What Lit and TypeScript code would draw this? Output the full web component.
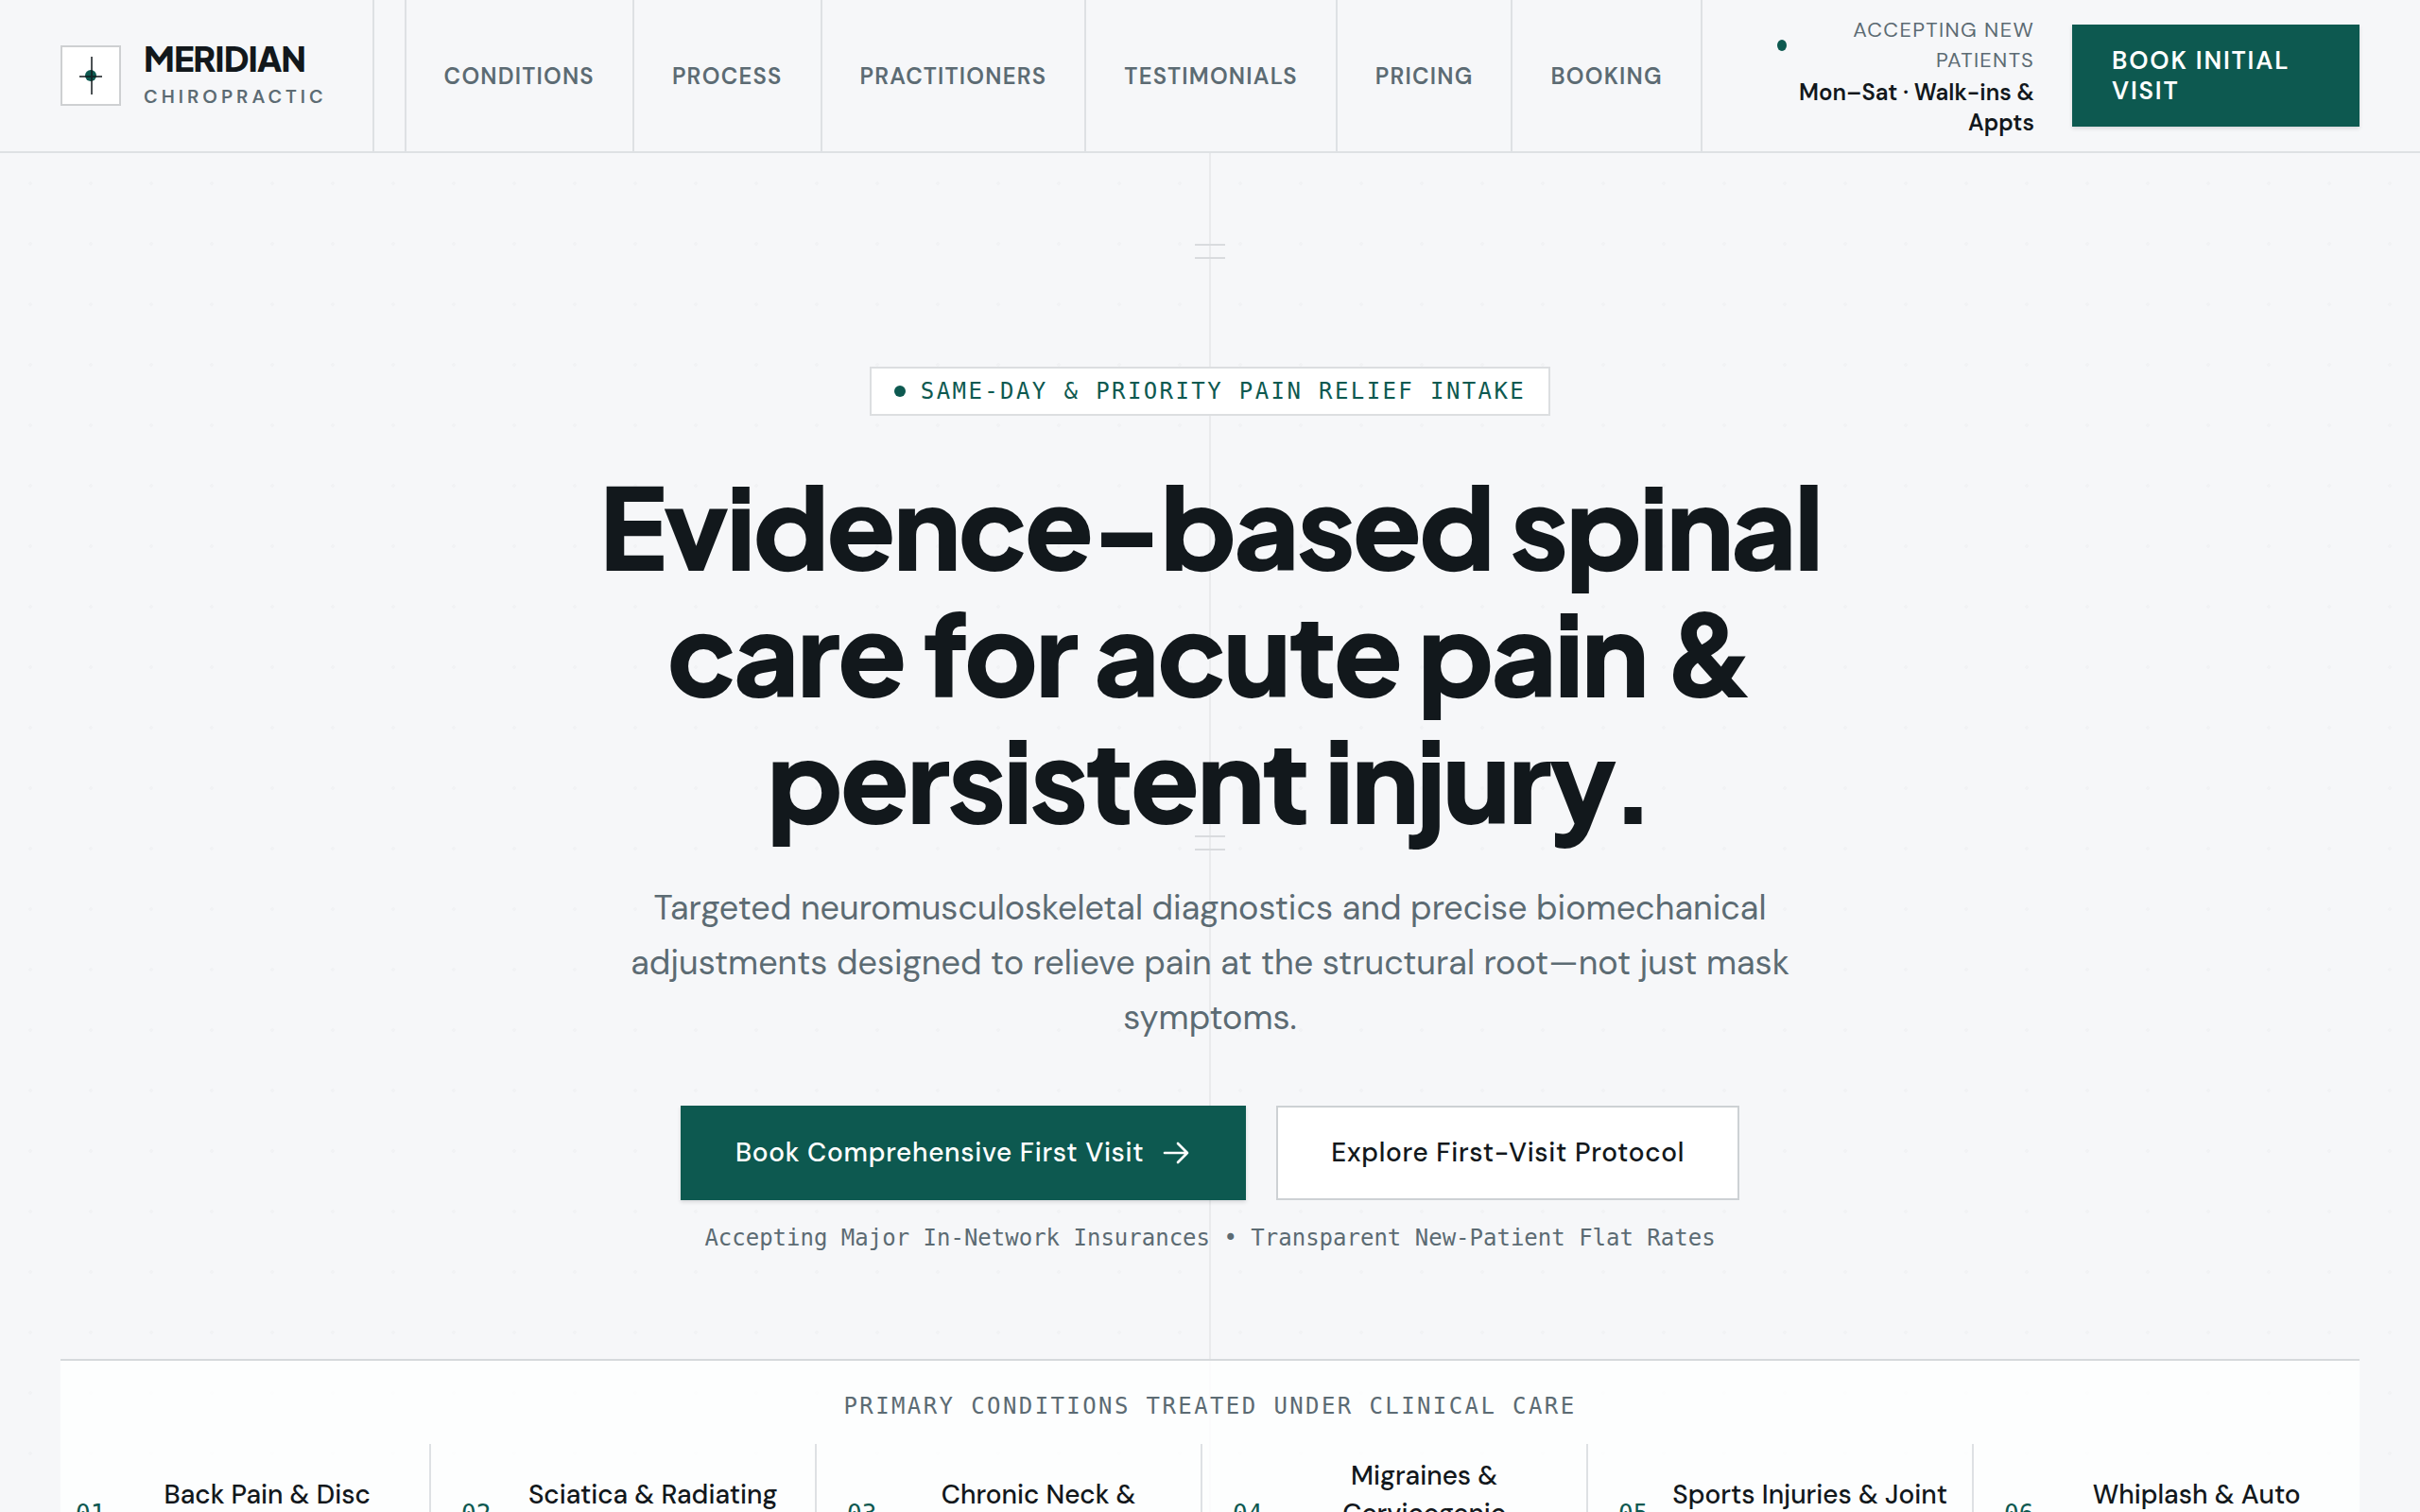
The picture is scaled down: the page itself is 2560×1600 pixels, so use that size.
import { LitElement, html, css, svg } from "lit";
import { customElement, property } from "lit/decorators.js";

const NAV = ["Conditions", "Process", "Practitioners", "Testimonials", "Pricing", "Booking"];

const CONDITIONS = [
  "Back Pain & Disc Herniation",
  "Sciatica & Radiating Leg Pain",
  "Chronic Neck & Shoulder Strain",
  "Migraines & Cervicogenic Headaches",
  "Sports Injuries & Joint Rehabilitation",
  "Whiplash & Auto Accident Injury",
];

const arrow = svg`<path d="M3 12h18M13.5 4.5 21 12l-7.5 7.5" fill="none" stroke="currentColor" stroke-width="2" stroke-linecap="round" stroke-linejoin="round"/>`;

@customElement("site-header")
export class SiteHeader extends LitElement {
  static styles = css`
    :host {
      display: block;
      border-bottom: 2px solid #dee1e4;
    }
    .bar {
      display: flex;
      align-items: stretch;
      min-height: 160px;
      padding: 0 64px;
    }
    .brand {
      display: flex;
      align-items: center;
      gap: 24px;
      padding-right: 48px;
      margin-right: 32px;
      border-right: 2px solid #dee1e4;
      color: inherit;
      text-decoration: none;
    }
    .mark {
      box-sizing: border-box;
      width: 64px;
      height: 64px;
      border: 2px solid #ced0d2;
      background: #fff;
    }
    .mark svg {
      display: block;
    }
    .words {
      display: flex;
      flex-direction: column;
      gap: 4px;
    }
    .name {
      font: 800 36px/40px "Plus Jakarta Sans", sans-serif;
      letter-spacing: -0.025em;
    }
    .sub {
      font-size: 20px;
      line-height: 32px;
      font-weight: 600;
      letter-spacing: 0.2em;
      color: #5c6b73;
    }
    .nav {
      display: flex;
      border-left: 2px solid #dee1e4;
    }
    .link {
      display: flex;
      align-items: center;
      padding: 0 40px;
      border-right: 2px solid #dee1e4;
      font-size: 24px;
      font-weight: 600;
      letter-spacing: 0.05em;
      text-transform: uppercase;
      text-decoration: none;
      color: #5c6b73;
    }
    .side {
      flex: 1;
      display: flex;
      align-items: center;
      justify-content: flex-end;
      gap: 40px;
    }
    .status {
      display: flex;
      flex-direction: column;
      align-items: flex-end;
      gap: 2px;
      padding-top: 2px;
      text-align: right;
      line-height: 32px;
    }
    .open {
      display: flex;
      align-items: center;
      gap: 12px;
      font-size: 22px;
      letter-spacing: 0.06em;
      text-transform: uppercase;
      color: #5c6b73;
    }
    .dot {
      width: 10px;
      height: 12px;
      border-radius: 50%;
      background: #0d5950;
    }
    .label,
    .hours {
      width: 250px;
    }
    .hours {
      font-size: 24px;
      font-weight: 600;
    }
    .cta {
      width: 304px;
      padding: 22px 42px;
      border: 0;
      background: #0d5950;
      box-shadow: 0 2px 4px rgba(18, 24, 28, 0.14);
      color: #fff;
      font: 600 26px/32px "DM Sans", sans-serif;
      letter-spacing: 0.07em;
      text-transform: uppercase;
      text-align: left;
    }
  `;

  render() {
    return html`
      <header class="bar">
        <a class="brand" href="#top">
          <span class="mark">
            <svg width="60" height="60" viewBox="0 0 60 60" aria-hidden="true">
              <circle cx="30" cy="30" r="6" fill="#0d5950" />
              <path d="M30 10h2v40h-2zM18 30h24v2h-24z" fill="#12181c" fill-opacity=".75" />
            </svg>
          </span>
          <span class="words">
            <span class="name">MERIDIAN</span>
            <span class="sub">CHIROPRACTIC</span>
          </span>
        </a>
        <nav class="nav">
          ${NAV.map((n) => html`<a class="link" href="#${n.toLowerCase()}">${n}</a>`)}
        </nav>
        <div class="side">
          <div class="status">
            <div class="open"><span class="dot"></span><span class="label">Accepting New Patients</span></div>
            <div class="hours">Mon–Sat · Walk-ins &amp; Appts</div>
          </div>
          <button class="cta" type="button">Book Initial Visit</button>
        </div>
      </header>
    `;
  }
}

@customElement("condition-cell")
export class ConditionCell extends LitElement {
  @property({ type: Number }) index = 0;
  @property() name = "";

  static styles = css`
    :host {
      display: flex;
      align-items: center;
      gap: 16px;
      padding: 14px 16px;
      border-right: 2px solid #dee1e4;
    }
    :host(:last-child) {
      border-right: 0;
    }
    .num {
      font: 26px/32px "DejaVu Sans Mono", monospace;
      color: #0d5950;
    }
    .name {
      flex: 1;
      font-size: 28px;
      line-height: 40px;
      font-weight: 500;
      text-align: center;
    }
  `;

  render() {
    return html`
      <span class="num">${String(this.index).padStart(2, "0")}</span>
      <span class="name">${this.name}</span>
    `;
  }
}

@customElement("app-root")
export class AppRoot extends LitElement {
  static styles = css`
    :host {
      display: block;
      height: 100vh;
      overflow: hidden;
      background: #f6f7f9;
      color: #12181c;
      font-family: "DM Sans", sans-serif;
    }
    .hero {
      position: relative;
      display: flex;
      flex-direction: column;
      align-items: center;
      padding: 226px 64px 96px;
      background: radial-gradient(circle, rgba(18, 24, 28, 0.02) 2px, transparent 2px) 0 0 / 64px 64px;
      text-align: center;
    }
    .axis {
      position: absolute;
      top: 0;
      bottom: 0;
      left: 50%;
      width: 2px;
      margin-left: -1px;
      background: #e9ebed;
    }
    .tick {
      position: absolute;
      left: 50%;
      width: 32px;
      height: 12px;
      margin-left: -16px;
      border: solid #d9dbde;
      border-width: 2px 0;
    }
    .tick.upper {
      top: 96px;
    }
    .tick.lower {
      top: 722px;
    }
    .badge,
    .title,
    .lead,
    .actions,
    .note,
    .panel {
      position: relative;
    }
    .badge {
      display: flex;
      align-items: center;
      gap: 16px;
      padding: 8px 24px;
      border: 2px solid #dcdee0;
      background: #fff;
      color: #0d5950;
      font: 24px/32px "DejaVu Sans Mono", monospace;
      letter-spacing: 0.1em;
      text-transform: uppercase;
    }
    .badge .dot {
      width: 12px;
      height: 12px;
      border-radius: 50%;
      background: #0d5950;
    }
    .title {
      max-width: 1400px;
      margin: 48px 0 0;
      font: 800 120px/134px "Plus Jakarta Sans", sans-serif;
      letter-spacing: -0.025em;
    }
    .lead {
      max-width: 1280px;
      margin: 42px 0 0;
      font-size: 36px;
      line-height: 58px;
      color: #5c6b73;
    }
    .actions {
      display: flex;
      gap: 32px;
      margin-top: 64px;
    }
    .btn {
      box-sizing: border-box;
      display: flex;
      align-items: center;
      gap: 18px;
      min-height: 100px;
      padding: 0 56px;
      border: 2px solid #cdd1d4;
      background: #fff;
      color: inherit;
      font: 500 28px/40px "DM Sans", sans-serif;
      letter-spacing: 0.025em;
      text-decoration: none;
    }
    .btn.solid {
      border-color: #0d5950;
      background: #0d5950;
      box-shadow: 0 2px 4px rgba(18, 24, 28, 0.14);
      color: #fff;
    }
    .note {
      margin: 24px 0 0;
      font: 24px/32px "DejaVu Sans Mono", monospace;
      color: #5c6b73;
    }
    .panel {
      align-self: stretch;
      margin-top: 112px;
      padding: 32px 0 24px;
      border-top: 2px solid #d6d9dc;
      background: rgba(255, 255, 255, 0.8);
    }
    .heading {
      margin: 0 0 24px;
      font: 24px/32px "DejaVu Sans Mono", monospace;
      letter-spacing: 0.1em;
      text-transform: uppercase;
      color: #5c6b73;
    }
    .cells {
      display: grid;
      grid-template-columns: repeat(6, minmax(0, 1fr));
      gap: 16px;
    }
  `;

  render() {
    return html`
      <site-header></site-header>
      <main class="hero" id="top">
        <span class="axis"></span>
        <span class="tick upper"></span>
        <span class="tick lower"></span>
        <div class="badge"><span class="dot"></span>Same-Day &amp; Priority Pain Relief Intake</div>
        <h1 class="title">Evidence-based spinal care for acute pain &amp; persistent injury.</h1>
        <p class="lead">
          Targeted neuromusculoskeletal diagnostics and precise biomechanical adjustments designed to relieve pain at
          the structural root—not just mask symptoms.
        </p>
        <div class="actions">
          <a class="btn solid" href="#booking">
            Book Comprehensive First Visit
            <svg width="32" height="32" viewBox="0 0 24 24" aria-hidden="true">${arrow}</svg>
          </a>
          <a class="btn" href="#process">Explore First-Visit Protocol</a>
        </div>
        <p class="note">Accepting Major In-Network Insurances • Transparent New-Patient Flat Rates</p>
        <section class="panel">
          <h2 class="heading">Primary Conditions Treated Under Clinical Care</h2>
          <div class="cells">
            ${CONDITIONS.map((name, i) => html`<condition-cell .index=${i + 1} .name=${name}></condition-cell>`)}
          </div>
        </section>
      </main>
    `;
  }
}
